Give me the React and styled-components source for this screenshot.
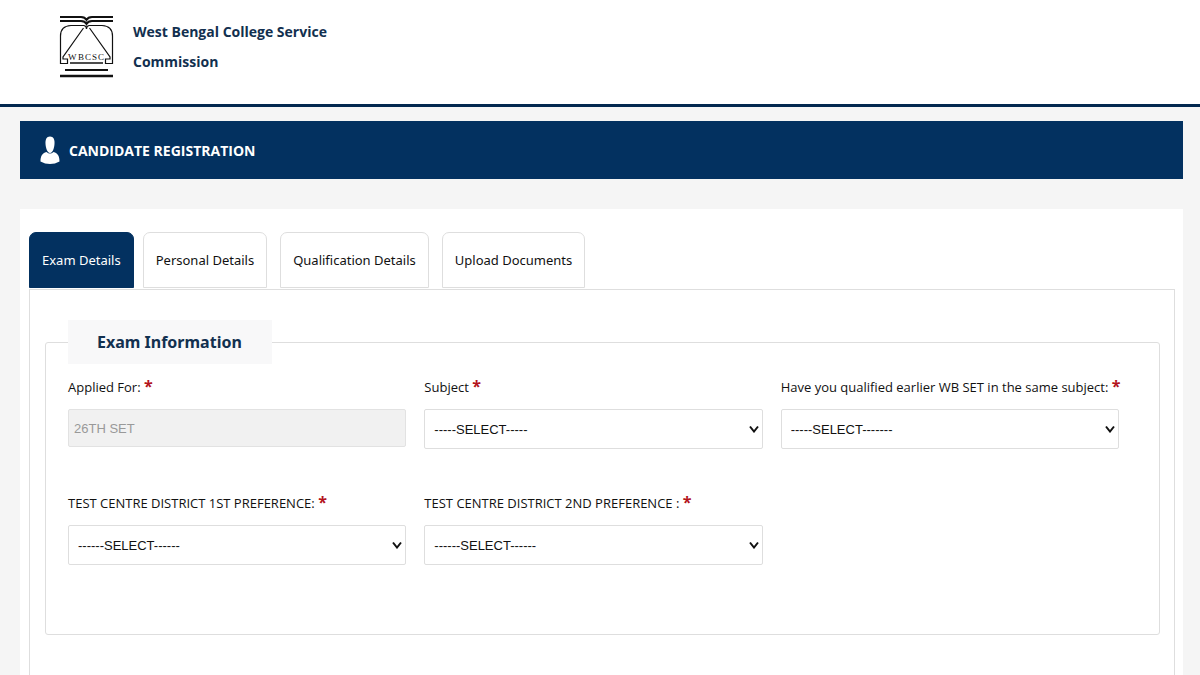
import React, { useState } from 'react'
import styled, { createGlobalStyle } from 'styled-components'

const tabs = [
  'Exam Details',
  'Personal Details',
  'Qualification Details',
  'Upload Documents',
]

const selects = [
  { id: 'subject', label: 'Subject', placeholder: '-----SELECT-----' },
  {
    id: 'qualified',
    label: 'Have you qualified earlier WB SET in the same subject:',
    placeholder: '-----SELECT-------',
  },
  {
    id: 'district1',
    label: 'TEST CENTRE DISTRICT 1ST PREFERENCE:',
    placeholder: '------SELECT------',
  },
  {
    id: 'district2',
    label: 'TEST CENTRE DISTRICT 2ND PREFERENCE :',
    placeholder: '------SELECT------',
  },
]

function Logo() {
  return (
    <svg width="56" height="64" viewBox="0 0 56 64" role="img" aria-label="WBCSC">
      <g fill="none" stroke="#111" strokeWidth="1.2">
        <path d="M1 2H22Q26 2 27.500 5Q29 2 33 2H54" strokeWidth="1.800" />
        <path d="M1 6H22Q26 6 27.500 9Q29 6 33 6H54" strokeWidth="1.800" />
        <path d="M25 10.500H12Q1.500 11 1.500 21V48.500H8.500V44H4L4 42L24.500 13" />
        <path d="M25 10.500Q27.500 11 27.500 14Q27.500 11 30 10.500H43Q53.500 11 53.500 21V48.500H46.500V44H51L51 42L30.500 13" />
        <path d="M11 48H44" strokeWidth="1.500" />
        <path d="M6 55H49" strokeWidth="1.800" />
        <path d="M1 61H54" strokeWidth="2.400" />
      </g>
      <text
        x="9 19 26 33 39"
        y="44.500"
        fontFamily="Liberation Serif, serif"
        fontSize="9"
        fill="#111"
      >
        WBCSC
      </text>
    </svg>
  )
}

function UserIcon() {
  return (
    <svg width="20" height="28" viewBox="0 0 20 28" aria-hidden="true">
      <path
        d="M0.500 25.500C0.500 20 2 17.500 6.500 16Q10 19 13.500 16C18 17.500 19.500 20 19.500 25.500Q15 28 10 28Q5 28 0.500 25.500Z"
        fill="#fff"
      />
      <path
        d="M10 0.500C13.500 0.500 14.800 3.500 14.500 8C14.200 12.500 12.500 17 10 17C7.500 17 5.800 12.500 5.500 8C5.200 3.500 6.500 0.500 10 0.500Z"
        fill="#fff"
      />
    </svg>
  )
}

function Field({ id, label, children }) {
  return (
    <FieldBox>
      <FieldLabel htmlFor={id}>
        {label} <Required>*</Required>
      </FieldLabel>
      {children}
    </FieldBox>
  )
}

function App() {
  const [active, setActive] = useState(tabs[0])

  return (
    <>
      <GlobalStyle />
      <Header>
        <Logo />
        <SiteName>
          West Bengal College Service
          <br />
          Commission
        </SiteName>
      </Header>
      <Main>
        <Banner>
          <UserIcon />
          <BannerTitle>CANDIDATE REGISTRATION</BannerTitle>
        </Banner>
        <Card>
          <TabList role="tablist">
            {tabs.map((tab) => (
              <Tab
                key={tab}
                type="button"
                role="tab"
                aria-selected={tab === active}
                $active={tab === active}
                onClick={() => setActive(tab)}
              >
                {tab}
              </Tab>
            ))}
          </TabList>
          <Panel role="tabpanel">
            <Group>
              <Legend>Exam Information</Legend>
              <Fields>
                <Field id="applied" label="Applied For:">
                  <TextInput id="applied" type="text" value="26TH SET" disabled />
                </Field>
                {selects.map(({ id, label, placeholder }) => (
                  <Field key={id} id={id} label={label}>
                    <SelectWrap>
                      <Select id={id}>
                        <option>{placeholder}</option>
                      </Select>
                      <Arrow viewBox="0 0 10 8" aria-hidden="true">
                        <path d="M1 1.500L5 6.500L9 1.500" />
                      </Arrow>
                    </SelectWrap>
                  </Field>
                ))}
              </Fields>
            </Group>
          </Panel>
        </Card>
      </Main>
    </>
  )
}

export default App

const GlobalStyle = createGlobalStyle`
  * {
    box-sizing: border-box;
  }
  body {
    margin: 0;
    background-color: #f5f5f5;
    color: #111;
    font-family: 'Open Sans', sans-serif;
  }
  #root {
    display: flex;
    flex-direction: column;
    min-height: 100vh;
  }
`

const Header = styled.header`
  display: flex;
  align-items: flex-start;
  gap: 18px;
  padding: 15px 59px 25px;
  background-color: #fff;
  border-bottom: 3px solid #03284f;
`

const SiteName = styled.h1`
  margin: 2px 0 0;
  color: #12304f;
  font-size: 14px;
  line-height: 30px;
  font-weight: 700;
`

const Main = styled.main`
  flex: 1;
  display: flex;
  flex-direction: column;
  gap: 30px;
  padding: 14px 17px 0 20px;
`

const Banner = styled.div`
  display: flex;
  align-items: center;
  gap: 9px;
  height: 58px;
  padding: 0 20px;
  background-color: #033160;
`

const BannerTitle = styled.h2`
  margin: 0;
  color: #fff;
  font-size: 14px;
  font-weight: 700;
`

const Card = styled.section`
  flex: 1;
  display: flex;
  flex-direction: column;
  padding: 23px 8px 0 9px;
  background-color: #fff;
`

const TabList = styled.div`
  display: flex;
  gap: 13px;
`

const Tab = styled.button`
  height: 56px;
  margin: 0 ${({ $active }) => ($active ? '-4px' : '0')} 1px 0;
  padding: 0 12px;
  border: 1px solid ${({ $active }) => ($active ? '#033160' : '#dedede')};
  border-radius: 7px 7px 0 0;
  background-color: ${({ $active }) => ($active ? '#033160' : '#fff')};
  color: ${({ $active }) => ($active ? '#fff' : '#111')};
  font-family: 'Noto Sans', sans-serif;
  font-size: 13px;
  cursor: pointer;
`

const Panel = styled.div`
  flex: 1;
  padding: 30px 14px 40px 15px;
  border: 1px solid #dedede;
  border-bottom: 0;
`

const Group = styled.fieldset`
  min-width: 0;
  margin: 0;
  padding: 0 22px 69px;
  border: 1px solid #dedede;
  border-radius: 3px;
`

const Legend = styled.legend`
  padding: 0 30px 0 29px;
  background-color: #f8f8f9;
  color: #12304f;
  font-family: 'Noto Sans', sans-serif;
  font-size: 16px;
  line-height: 44px;
  font-weight: 700;
`

const Fields = styled.div`
  display: grid;
  grid-template-columns: repeat(3, 1fr);
  row-gap: 42px;
  padding-top: 11px;
`

const FieldBox = styled.div`
  display: flex;
  flex-direction: column;
  gap: 10px;
  min-width: 0;
  padding-right: 18px;
`

const FieldLabel = styled.label`
  font-size: 13px;
  line-height: 24px;
  white-space: nowrap;
`

const Required = styled.span`
  color: #b3141c;
  font-size: 16px;
  line-height: 16px;
  font-weight: 700;
`

const TextInput = styled.input`
  width: 100%;
  height: 38px;
  padding: 0 5px;
  border: 1px solid #e2e2e2;
  border-radius: 2px;
  background-color: #f1f1f1;
  color: #999;
  font-family: 'Liberation Sans', Arial, sans-serif;
  font-size: 13px;
`

const SelectWrap = styled.div`
  position: relative;
`

const Select = styled.select`
  appearance: none;
  display: block;
  width: 100%;
  height: 40px;
  padding: 0 24px 0 9px;
  border: 1px solid #dedede;
  border-radius: 2px;
  background-color: #fff;
  color: #111;
  font-family: 'Liberation Sans', Arial, sans-serif;
  font-size: 13px;
`

const Arrow = styled.svg`
  position: absolute;
  top: 16px;
  right: 4px;
  width: 10px;
  height: 8px;
  fill: none;
  stroke: #111;
  stroke-width: 2;
  pointer-events: none;
`
